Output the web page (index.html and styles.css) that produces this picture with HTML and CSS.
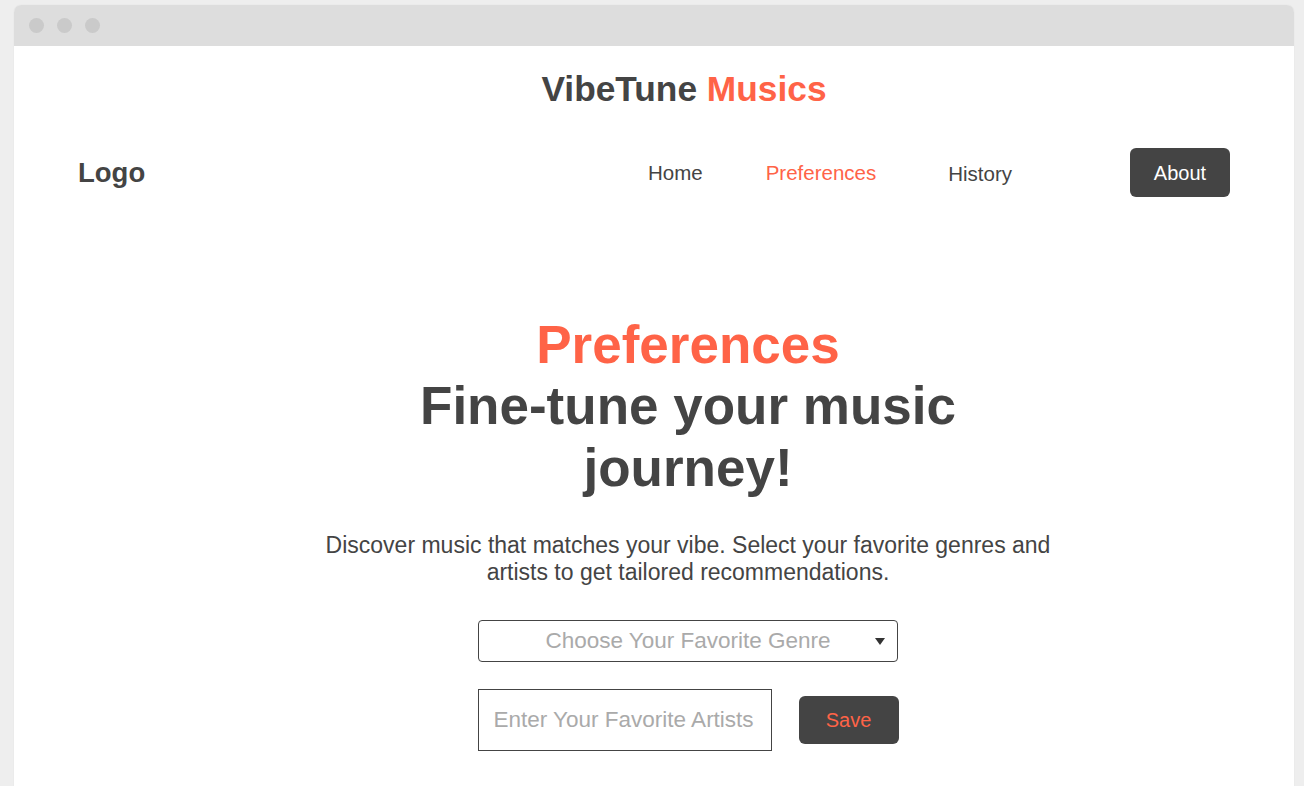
FILE: index.html
```html
<!DOCTYPE html>
<html lang="en">
<head>
<meta charset="utf-8">
<title>VibeTune Musics</title>
<link rel="stylesheet" href="styles.css">
</head>
<body>
<div class="window">
  <div class="titlebar">
    <span class="dot"></span><span class="dot"></span><span class="dot"></span>
  </div>
  <div class="page">
    <h1 class="site-title">VibeTune <span class="accent">Musics</span></h1>
    <nav class="nav">
      <div class="logo">Logo</div>
      <ul class="nav-links">
        <li class="nav-home"><a href="#">Home</a></li>
        <li class="nav-prefs"><a href="#" class="active">Preferences</a></li>
        <li class="nav-history"><a href="#">History</a></li>
        <li class="nav-about"><a href="#" class="btn-about">About</a></li>
      </ul>
    </nav>
    <main class="hero">
      <h2 class="hero-title"><span class="accent hero-kicker">Preferences</span>Fine-tune your music journey!</h2>
      <p class="hero-text">Discover music that matches your vibe. Select your favorite genres and artists to get tailored recommendations.</p>
      <div class="select">
        <span class="select-label">Choose Your Favorite Genre</span>
        <span class="caret"></span>
      </div>
      <div class="artist-row">
        <input class="artist-input" type="text" placeholder="Enter Your Favorite Artists">
        <button class="btn-save">Save</button>
      </div>
    </main>
  </div>
</div>
</body>
</html>
```
FILE: styles.css
```css
* { box-sizing: border-box; }
html, body { margin: 0; padding: 0; }
body {
  background: #eeeeee;
  font-family: "Liberation Sans", Arial, sans-serif;
  color: #444444;
  height: 786px;
  overflow: hidden;
}
.window {
  margin: 5px 10px 0 14px;
  width: 1280px;
  height: 800px;
  background: #ffffff;
  border-radius: 7px 7px 0 0;
  box-shadow: 0 0 1px rgba(0,0,0,0.12);
  overflow: hidden;
}
.titlebar {
  height: 41px;
  background: #dddddd;
  display: flex;
  align-items: center;
  gap: 13px;
  padding: 0 0 0 15px;
}
.dot {
  width: 15px;
  height: 15px;
  border-radius: 50%;
  background: #cacaca;
}
.accent { color: #ff6347; }
.page { padding: 0 64px; }
.site-title {
  margin: 0;
  padding: 23px 0 0 60px;
  text-align: center;
  font-size: 35.3px;
  font-weight: 700;
  line-height: 40px;
}
.nav {
  margin-top: 39px;
  display: flex;
  align-items: center;
  justify-content: space-between;
  height: 49px;
}
.logo {
  font-size: 27.5px;
  font-weight: 700;
}
.nav-links {
  list-style: none;
  margin: 0;
  padding: 0;
  display: flex;
  align-items: center;
}
.nav-links li { padding-top: 1px; }
.nav-links a {
  color: #444444;
  text-decoration: none;
  font-size: 20.5px;
}
.nav-links a.active { color: #ff6347; }
.nav-prefs { margin-left: 63px; }
.nav-links .nav-history { margin-left: 72px; padding-top: 3px; }
.nav-about { margin-left: 118px; }
.nav-links .nav-about { padding-top: 0; }
.nav-links a.btn-about {
  display: block;
  width: 100px;
  height: 49px;
  padding-top: 2px;
  line-height: 47px;
  text-align: center;
  background: #444444;
  color: #ffffff;
  border-radius: 6px;
  font-size: 20px;
}
.hero {
  margin-top: 118px;
  padding-left: 68px;
  display: flex;
  flex-direction: column;
  align-items: center;
  text-align: center;
}
.hero-title {
  margin: 0;
  width: 600px;
  font-size: 53px;
  line-height: 62px;
  font-weight: 700;
}
.hero-kicker { display: block; line-height: 60px; }
.hero-text {
  margin: 33px 0 0;
  width: 750px;
  font-size: 23px;
  line-height: normal;
}
.select {
  margin-top: 34px;
  width: 420px;
  height: 42px;
  border: 1px solid #444444;
  border-radius: 4px;
  display: flex;
  align-items: center;
  justify-content: center;
  position: relative;
}
.select-label {
  color: #aaaaaa;
  font-size: 22.5px;
}
.caret {
  position: absolute;
  right: 12px;
  top: 17px;
  width: 0;
  height: 0;
  border-left: 5.5px solid transparent;
  border-right: 5.5px solid transparent;
  border-top: 7px solid #333333;
}
.artist-row {
  margin-top: 27px;
  display: flex;
  align-items: center;
  gap: 27px;
}
.artist-input {
  width: 294px;
  height: 62px;
  border: 1px solid #444444;
  border-radius: 0;
  padding: 0 15px;
  font-family: "Liberation Sans", Arial, sans-serif;
  font-size: 22.5px;
  color: #444444;
  outline: none;
}
.artist-input::placeholder { color: #aaaaaa; }
.btn-save {
  width: 100px;
  height: 48px;
  border: none;
  border-radius: 6px;
  background: #444444;
  color: #ff6347;
  font-family: "Liberation Sans", Arial, sans-serif;
  font-size: 20px;
}
```
